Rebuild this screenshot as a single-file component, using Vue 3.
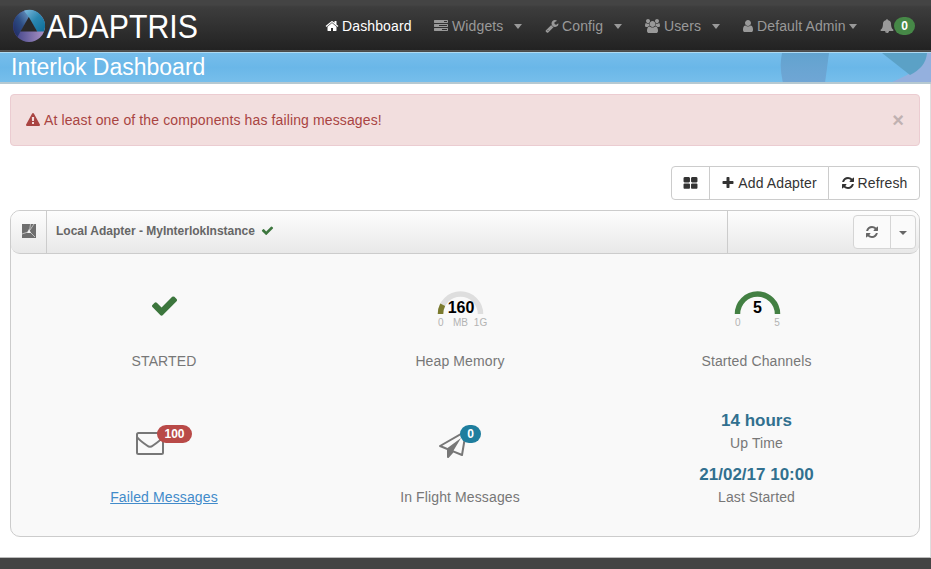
<script setup>
import { h } from 'vue'

const paths = {
  home: [1792, 'M1472 992v480q0 26-19 45t-45 19h-384v-384h-256v384h-384q-26 0-45-19t-19-45v-480q0-1 .5-3t.5-3l575-474 575 474q1 2 1 6zm223-69l-62 74q-8 9-21 11h-3q-13 0-21-7l-692-577-692 577q-12 8-24 7-13-2-21-11l-62-74q-8-10-7-23.5t11-21.5l719-599q32-26 76-26t76 26l244 204v-195q0-14 9-23t23-9h192q14 0 23 9t9 23v408l219 182q10 8 11 21.5t-7 23.5z'],
  tasks: [1792, 'M1024 1408h640v-128h-640v128zm-384-512h1024v-128h-1024v128zm640-512h384v-128h-384v128zm512 832v256q0 26-19 45t-45 19h-1664q-26 0-45-19t-19-45v-256q0-26 19-45t45-19h1664q26 0 45 19t19 45zm0-512v256q0 26-19 45t-45 19h-1664q-26 0-45-19t-19-45v-256q0-26 19-45t45-19h1664q26 0 45 19t19 45zm0-512v256q0 26-19 45t-45 19h-1664q-26 0-45-19t-19-45v-256q0-26 19-45t45-19h1664q26 0 45 19t19 45z'],
  wrench: [1792, 'M448 1472q0-26-19-45t-45-19-45 19-19 45 19 45 45 19 45-19 19-45zm644-420l-682 682q-37 37-90 37-52 0-91-37l-106-108q-38-36-38-90 0-53 38-91l681-681q39 98 114.5 173.5t173.5 114.5zm634-435q0 39-23 106-47 134-164.5 217.5t-258.5 83.5q-185 0-316.5-131.5t-131.5-316.5 131.5-316.5 316.5-131.5q58 0 121.5 16.5t107.5 46.5q16 11 16 28t-16 28l-293 169v224l193 107q5-3 79-48.5t135.5-81 70.5-35.5q15 0 23.5 10t8.5 25z'],
  users: [1920, 'M593 896q-162 5-265 128h-134q-82 0-138-40.5t-56-118.5q0-353 124-353 6 0 43.5 21t97.5 42.5 119 21.5q67 0 133-23-5 37-5 66 0 139 81 256zm1071 637q0 120-73 189.5t-194 69.5h-874q-121 0-194-69.5t-73-189.5q0-53 3.5-103.5t14-109 26.5-108.5 43-97.5 62-81 85.5-53.5 111.5-20q10 0 43 21.5t73 48 107 48 135 21.5 135-21.5 107-48 73-48 43-21.5q61 0 111.5 20t85.5 53.5 62 81 43 97.5 26.5 108.5 14 109 3.5 103.5zm-1024-1277q0 106-75 181t-181 75-181-75-75-181 75-181 181-75 181 75 75 181zm704 384q0 159-112.5 271.5t-271.5 112.5-271.5-112.5-112.5-271.5 112.5-271.5 271.5-112.5 271.5 112.5 112.5 271.5zm576 225q0 78-56 118.5t-138 40.5h-134q-103-123-265-128 81-117 81-256 0-29-5-66 66 23 133 23 59 0 119-21.5t97.5-42.5 43.5-21q124 0 124 353zm-128-609q0 106-75 181t-181 75-181-75-75-181 75-181 181-75 181 75 75 181z'],
  user: [1792, 'M1536 1399q0 109-62.5 187t-150.5 78h-854q-88 0-150.5-78t-62.5-187q0-85 8.5-160.5t31.5-152 58.5-131 94-89 134.5-34.5q131 128 313 128t313-128q76 0 134.5 34.5t94 89 58.5 131 31.5 152 8.5 160.5zm-256-887q0 159-112.5 271.5t-271.5 112.5-271.5-112.5-112.5-271.5 112.5-271.5 271.5-112.5 271.5 112.5 112.5 271.5z'],
  bell: [1792, 'M912 1696q0-16-16-16-59 0-101.5-42.5t-42.5-101.5q0-16-16-16t-16 16q0 73 51.5 124.5t124.5 51.5q16 0 16-16zm816-288q0 52-38 90t-90 38h-448q0 106-75 181t-181 75-181-75-75-181h-448q-52 0-90-38t-38-90q50-42 91-88t85-119.5 74.5-158.5 50-206 19.5-260q0-152 117-282.5t307-158.5q-8-19-8-39 0-40 28-68t68-28 68 28 28 68q0 20-8 39 190 28 307 158.5t117 282.5q0 139 19.5 260t50 206 74.5 158.5 85 119.5 91 88z'],
  warning: [1792, 'M1024 1375v-190q0-14-9.5-23.5t-22.5-9.5h-192q-13 0-22.5 9.5t-9.5 23.5v190q0 14 9.5 23.5t22.5 9.5h192q13 0 22.5-9.5t9.5-23.5zm-2-374l18-459q0-12-10-19-13-11-24-11h-220q-11 0-24 11-10 7-10 21l17 457q0 10 10 16.5t24 6.5h185q14 0 23.5-6.5t10.5-16.5zm-14-934l768 1408q35 63-2 126-17 29-46.5 46t-63.5 17h-1536q-34 0-63.5-17t-46.5-46q-37-63-2-126l768-1408q17-31 47-49t65-18 65 18 47 49z'],
  large: [1792, 'M832 1024v384q0 52-38 90t-90 38h-512q-52 0-90-38t-38-90v-384q0-52 38-90t90-38h512q52 0 90 38t38 90zm0-768v384q0 52-38 90t-90 38h-512q-52 0-90-38t-38-90v-384q0-52 38-90t90-38h512q52 0 90 38t38 90zm896 768v384q0 52-38 90t-90 38h-512q-52 0-90-38t-38-90v-384q0-52 38-90t90-38h512q52 0 90 38t38 90zm0-768v384q0 52-38 90t-90 38h-512q-52 0-90-38t-38-90v-384q0-52 38-90t90-38h512q52 0 90 38t38 90z'],
  plus: [1792, 'M1600 736v192q0 40-28 68t-68 28h-416v416q0 40-28 68t-68 28h-192q-40 0-68-28t-28-68v-416h-416q-40 0-68-28t-28-68v-192q0-40 28-68t68-28h416v-416q0-40 28-68t68-28h192q40 0 68 28t28 68v416h416q40 0 68 28t28 68z'],
  refresh: [1792, 'M1639 1056q0 5-1 7-64 268-268 434.5t-478 166.5q-146 0-282.5-55t-243.5-157l-129 129q-19 19-45 19t-45-19-19-45v-448q0-26 19-45t45-19h448q26 0 45 19t19 45-19 45l-137 137q71 66 161 102t187 36q134 0 250-65t186-179q11-17 53-117 8-23 30-23h192q13 0 22.5 9.5t9.5 22.5zm25-800v448q0 26-19 45t-45 19h-448q-26 0-45-19t-19-45 19-45l138-138q-148-137-349-137-134 0-250 65t-186 179q-11 17-53 117-8 23-30 23h-199q-13 0-22.5-9.5t-9.5-22.5v-7q65-268 270-434.5t480-166.5q146 0 284 55.5t245 156.5l130-129q19-19 45-19t45 19 19 45z'],
  check: [1792, 'M1671 566q0 40-28 68l-724 724-136 136q-28 28-68 28t-68-28l-136-136-362-362q-28-28-28-68t28-68l136-136q28-28 68-28t68 28l294 295 656-657q28-28 68-28t68 28l136 136q28 28 28 68z'],
  plane: [1792, 'M1764 11q33 24 27 64l-256 1536q-5 29-32 45-14 8-31 8-11 0-24-5l-527-215-298 327q-18 21-47 21-14 0-23-4-19-7-30-23.5t-11-36.5v-452l-472-193q-37-14-40-55-3-39 32-59l1664-960q35-21 68 2zm-342 1499l221-1323-1434 827 336 137 863-639-478 797z'],
}

const Icon = (props) => {
  const [w, d] = paths[props.name]
  const size = props.size || 14
  return h('svg', { width: (size * w) / 1792, height: size, viewBox: `0 0 ${w} 1792`, fill: 'currentColor' }, [h('path', { d })])
}
Icon.props = ['name', 'size']

const nav = [
  { id: 'dashboard', icon: 'home', label: 'Dashboard', active: true },
  { id: 'widgets', icon: 'tasks', label: 'Widgets', caret: true },
  { id: 'config', icon: 'wrench', label: 'Config', caret: true },
  { id: 'users', icon: 'users', label: 'Users', caret: true },
  { id: 'admin', icon: 'user', label: 'Default Admin', caret: true, tight: true },
]
</script>

<template>
  <div class="page">
    <header class="navbar">
      <svg class="logo" width="200" height="50" viewBox="0 0 200 50">
        <defs>
          <linearGradient id="ringBlue" x1="0" y1="0" x2="1" y2="1">
            <stop offset="0" stop-color="#7fb9dc" /><stop offset=".5" stop-color="#2a86b0" /><stop offset="1" stop-color="#0d6d98" />
          </linearGradient>
          <linearGradient id="ringNavy" x1="1" y1="0" x2="0" y2="1">
            <stop offset="0" stop-color="#6f9fca" /><stop offset=".5" stop-color="#2d4d83" /><stop offset="1" stop-color="#20265f" />
          </linearGradient>
          <linearGradient id="ringViolet" x1="0" y1="0" x2="1" y2="0">
            <stop offset="0" stop-color="#3b3f85" /><stop offset="1" stop-color="#ad94c6" />
          </linearGradient>
        </defs>
        <circle cx="21" cy="26" r="16" fill="url(#ringViolet)" />
        <path d="M21 10a16 16 0 0 0-11.500 27L12.500 31.500 21 17z" fill="url(#ringNavy)" />
        <path d="M16 10.800a16 16 0 0 1 20 20.700H29L20 16z" fill="url(#ringBlue)" />
        <path d="M20.800 17l8.400 14.500H12.400z" fill="#292929" />
        <text x="38.500" y="38" textLength="151.500" lengthAdjust="spacingAndGlyphs" class="brand">ADAPTRIS</text>
      </svg>
      <nav class="menu">
        <a v-for="item in nav" :key="item.id" class="item" :class="[item.id, { active: item.active, tight: item.tight }]">
          <span class="glyph"><Icon :name="item.icon" /></span>
          <span>{{ item.label }}</span>
          <i v-if="item.caret" class="caret"></i>
        </a>
        <a class="item alerts"><Icon name="bell" /><b class="badge green">0</b></a>
      </nav>
    </header>

    <div class="banner">
      <h1>Interlok Dashboard</h1>
      <svg class="art" width="151" height="30" viewBox="0 0 151 30">
        <defs>
          <linearGradient id="blade" x1="0" y1="0" x2="0" y2="1">
            <stop offset="0" stop-color="#62a3cf" /><stop offset="1" stop-color="#70a6d5" />
          </linearGradient>
        </defs>
        <path d="M2 0h47q-2 15-4 30H3Q-1 14 2 0z" fill="url(#blade)" />
        <path d="M147 0q-2 12-20 22-8 4-17 8h41V0z" fill="#94b0de" />
        <path d="M102 0h45q-1 14-17 22z" fill="#5ba1c6" />
      </svg>
    </div>

    <main class="content">
      <div class="alert">
        <Icon name="warning" />
        <span>At least one of the components has failing messages!</span>
        <b class="close">×</b>
      </div>

      <div class="toolbar">
        <button class="layout"><Icon name="large" size="15" /></button>
        <button class="add"><Icon name="plus" /><span>Add Adapter</span></button>
        <button class="reload"><Icon name="refresh" /><span>Refresh</span></button>
      </div>

      <section class="panel">
        <div class="panel-head">
          <div class="kind">
            <svg width="14" height="14" viewBox="0 0 14 14">
              <path d="M0 0h14v14H0z" fill="#6e6e6e" />
              <path d="M7.500 7L8.500 0M6 8L0 10M8 8L13 13M12 0L8 6" stroke="#c4c4c4" stroke-width=".9" fill="none" />
              <path d="M7 5l2 4H5z" fill="#f1f1f1" />
            </svg>
          </div>
          <div class="name"><b>Local Adapter - MyInterlokInstance</b><Icon name="check" size="13" /></div>
          <div class="actions">
            <div class="split">
              <span class="sync"><Icon name="refresh" /></span>
              <span class="drop"><i class="caret small"></i></span>
            </div>
          </div>
        </div>

        <div class="stats">
          <div class="cell">
            <div class="figure ok"><Icon name="check" size="29" /></div>
            <span>STARTED</span>
          </div>
          <div class="cell">
            <div class="figure">
              <svg width="64" height="44" viewBox="0 0 64 44">
                <path d="M12.500 28a20 20 0 0 1 40 0" fill="none" stroke="#dedede" stroke-width="5.500" />
                <path d="M12.500 28a20 20 0 0 1 2.200-9.200" fill="none" stroke="#7b7b2e" stroke-width="5.500" />
                <text x="33" y="27" class="value">160</text>
                <text x="12.800" y="40" class="tick">0</text>
                <text x="32.500" y="40" class="tick">MB</text>
                <text x="52.500" y="40" class="tick">1G</text>
              </svg>
            </div>
            <span>Heap Memory</span>
          </div>
          <div class="cell">
            <div class="figure">
              <svg width="64" height="44" viewBox="0 0 64 44">
                <path d="M12.500 28a20 20 0 0 1 40 0" fill="none" stroke="#438043" stroke-width="5.500" />
                <text x="32.500" y="27" class="value">5</text>
                <text x="12.700" y="40" class="tick">0</text>
                <text x="52" y="40" class="tick">5</text>
              </svg>
            </div>
            <span>Started Channels</span>
          </div>
          <div class="cell">
            <div class="figure">
              <div class="counter mail">
                <svg width="28" height="23" viewBox="0 0 28 23" fill="none" stroke="#777" stroke-width="2">
                  <rect x="1" y="1" width="26" height="21" rx="1.500" />
                  <path d="M1 5Q3 8 11 13.500q3 2.500 6 0Q25 8 27 5" />
                </svg>
                <b class="badge red">100</b>
              </div>
            </div>
            <a class="link">Failed Messages</a>
          </div>
          <div class="cell">
            <div class="figure">
              <div class="counter flight">
                <Icon name="plane" size="28" />
                <b class="badge teal">0</b>
              </div>
            </div>
            <span>In Flight Messages</span>
          </div>
          <div class="cell times">
            <b>14 hours</b>
            <span>Up Time</span>
            <b class="second">21/02/17 10:00</b>
            <span>Last Started</span>
          </div>
        </div>
      </section>
    </main>
    <footer class="footer"></footer>
  </div>
</template>

<style>
body {
  background: #fff;
  overflow: hidden;
}
</style>

<style scoped>
.page {
  box-sizing: border-box;
  width: 931px;
  height: 569px;
  display: flex;
  flex-direction: column;
  font: 14px/20px "Liberation Sans", Arial, sans-serif;
  letter-spacing: .12px;
  color: #777;
}
.page * { box-sizing: border-box; }
.page b, .page h1, .page text { letter-spacing: 0; }
svg { display: block; flex: none; }
.navbar {
  height: 52px;
  flex: none;
  display: flex;
  background: linear-gradient(#444 0, #444 5px, #3d3d3d 7px, #222 50px, #555 50px, #484848 52px);
  padding: 0 16px 0 8px;
}
.brand {
  font: 33px "Liberation Sans", Arial, sans-serif;
  fill: #fff;
}
.menu {
  margin-left: auto;
  display: flex;
  align-items: center;
  height: 52px;
}
.item {
  display: flex;
  align-items: center;
  color: #999;
  white-space: nowrap;
}
.item.active { color: #fff; }
.dashboard { width: 109px; }
.widgets { width: 111px; }
.config { width: 100px; }
.users { width: 98px; }
.admin { width: 137px; }
.alerts { width: 35px; }
.glyph {
  width: 17px;
  flex: none;
  display: flex;
  justify-content: flex-start;
}
.widgets .glyph { width: 18px; }
.users .glyph { width: 19px; }
.admin .glyph { width: 14px; }
.admin .glyph svg { margin-left: -2px; }
.caret {
  width: 0;
  height: 0;
  border: 4.500px solid transparent;
  border-top: 5px solid currentColor;
  border-bottom: 0;
  margin-left: 11px;
}
.tight .caret { margin-left: 3px; }
.caret.small {
  border-width: 4px 4px 0;
  margin: 1px 0 0;
}
.badge {
  display: block;
  height: 18px;
  border-radius: 9px;
  color: #fff;
  font-size: 12px;
  line-height: 18px;
  text-align: center;
}
.green { width: 21px; background: #468847; }
.banner {
  height: 32px;
  flex: none;
  display: flex;
  justify-content: space-between;
  background: linear-gradient(#76bdeb, #6ab7e8 50%, #76beeb);
  border-top: 1px solid #aedaf2;
  border-bottom: 2px solid #b6c9d1;
  overflow: hidden;
}
h1 {
  margin: 0;
  padding-left: 11px;
  color: #fff;
  font-size: 23px;
  font-weight: normal;
  line-height: 29px;
}
.content {
  height: 474px;
  flex: none;
  padding: 10px 10px 0;
  border-right: 1px solid #ddd;
  border-bottom: 1px solid #bbb;
}
.alert {
  height: 52px;
  display: flex;
  align-items: center;
  gap: 4px;
  padding: 0 15px;
  border: 1px solid #ebccd1;
  border-radius: 4px;
  background: #f2dede;
  color: #a94442;
}
.close {
  margin-left: auto;
  font-size: 20px;
  color: #c0b1b1;
}
.toolbar {
  margin-top: 20px;
  display: flex;
  justify-content: flex-end;
}
.toolbar button {
  height: 34px;
  display: flex;
  align-items: center;
  justify-content: center;
  gap: 3px;
  padding: 0;
  border: 1px solid #ccc;
  margin-left: -1px;
  background: #fff;
  color: #333;
  font: inherit;
  letter-spacing: inherit;
}
.toolbar .layout { width: 39px; border-radius: 4px 0 0 4px; }
.toolbar .add { width: 120px; }
.toolbar .reload { width: 92px; border-radius: 0 4px 4px 0; }
.panel {
  margin-top: 10px;
  height: 327px;
  border: 1px solid #ccc;
  border-radius: 10px;
  background: #f9f9f9;
}
.panel-head {
  height: 43px;
  display: flex;
  border-bottom: 1px solid #ccc;
  border-radius: 9px;
  background: linear-gradient(#fdfdfd, #e8e8e8);
}
.kind {
  width: 36px;
  display: flex;
  justify-content: center;
  align-items: center;
  border-right: 1px solid #ccc;
  padding-bottom: 2px;
}
.name {
  flex: 1;
  display: flex;
  align-items: center;
  gap: 6px;
  padding: 0 0 3px 9px;
  font-size: 12px;
  color: #666;
}
.name svg, .ok { color: #3c763d; }
.actions {
  width: 192px;
  display: flex;
  justify-content: flex-end;
  padding: 4px 3px 0 0;
  border-left: 1px solid #ccc;
}
.split {
  height: 34px;
  width: 63px;
  display: flex;
  border: 1px solid #d5d5d5;
  border-radius: 4px;
  background: #fafafa;
  color: #666;
}
.split span { display: flex; align-items: center; justify-content: center; }
.sync { flex: 1; }
.drop { width: 25px; border-left: 1px solid #d5d5d5; }
.stats {
  display: grid;
  grid-template-columns: 296px 296px 297px;
  grid-template-rows: 136px 136px;
  padding-left: 5px;
}
.cell {
  display: flex;
  flex-direction: column;
  align-items: center;
  padding-top: 24px;
}
.figure {
  height: 60px;
  margin-bottom: 13px;
  display: flex;
  align-items: center;
}
.ok { padding-bottom: 5px; }
.value {
  font: bold 16px "Liberation Sans", Arial, sans-serif;
  fill: #000;
  text-anchor: middle;
}
.tick {
  font: 10px "Liberation Sans", Arial, sans-serif;
  fill: #b3b3b3;
  text-anchor: middle;
}
.counter { position: relative; }
.counter .badge { position: absolute; }
.mail { margin: -1px 28px 0 0; }
.mail .badge { left: 21px; top: -7px; width: 35px; }
.flight { margin: -1px 14px 0 0; }
.flight .badge { left: 21px; top: -5px; width: 21px; }
.red { background: #b94a48; }
.teal { background: #1f7e9e; }
.link { color: #428bca; text-decoration: underline; }
.times { padding-top: 21px; }
.times b { font-size: 17px; line-height: 20px; color: #31708f; margin-bottom: 2px; }
.times .second { margin-top: 12px; }
.footer { flex: 1; background: #444; }
</style>
